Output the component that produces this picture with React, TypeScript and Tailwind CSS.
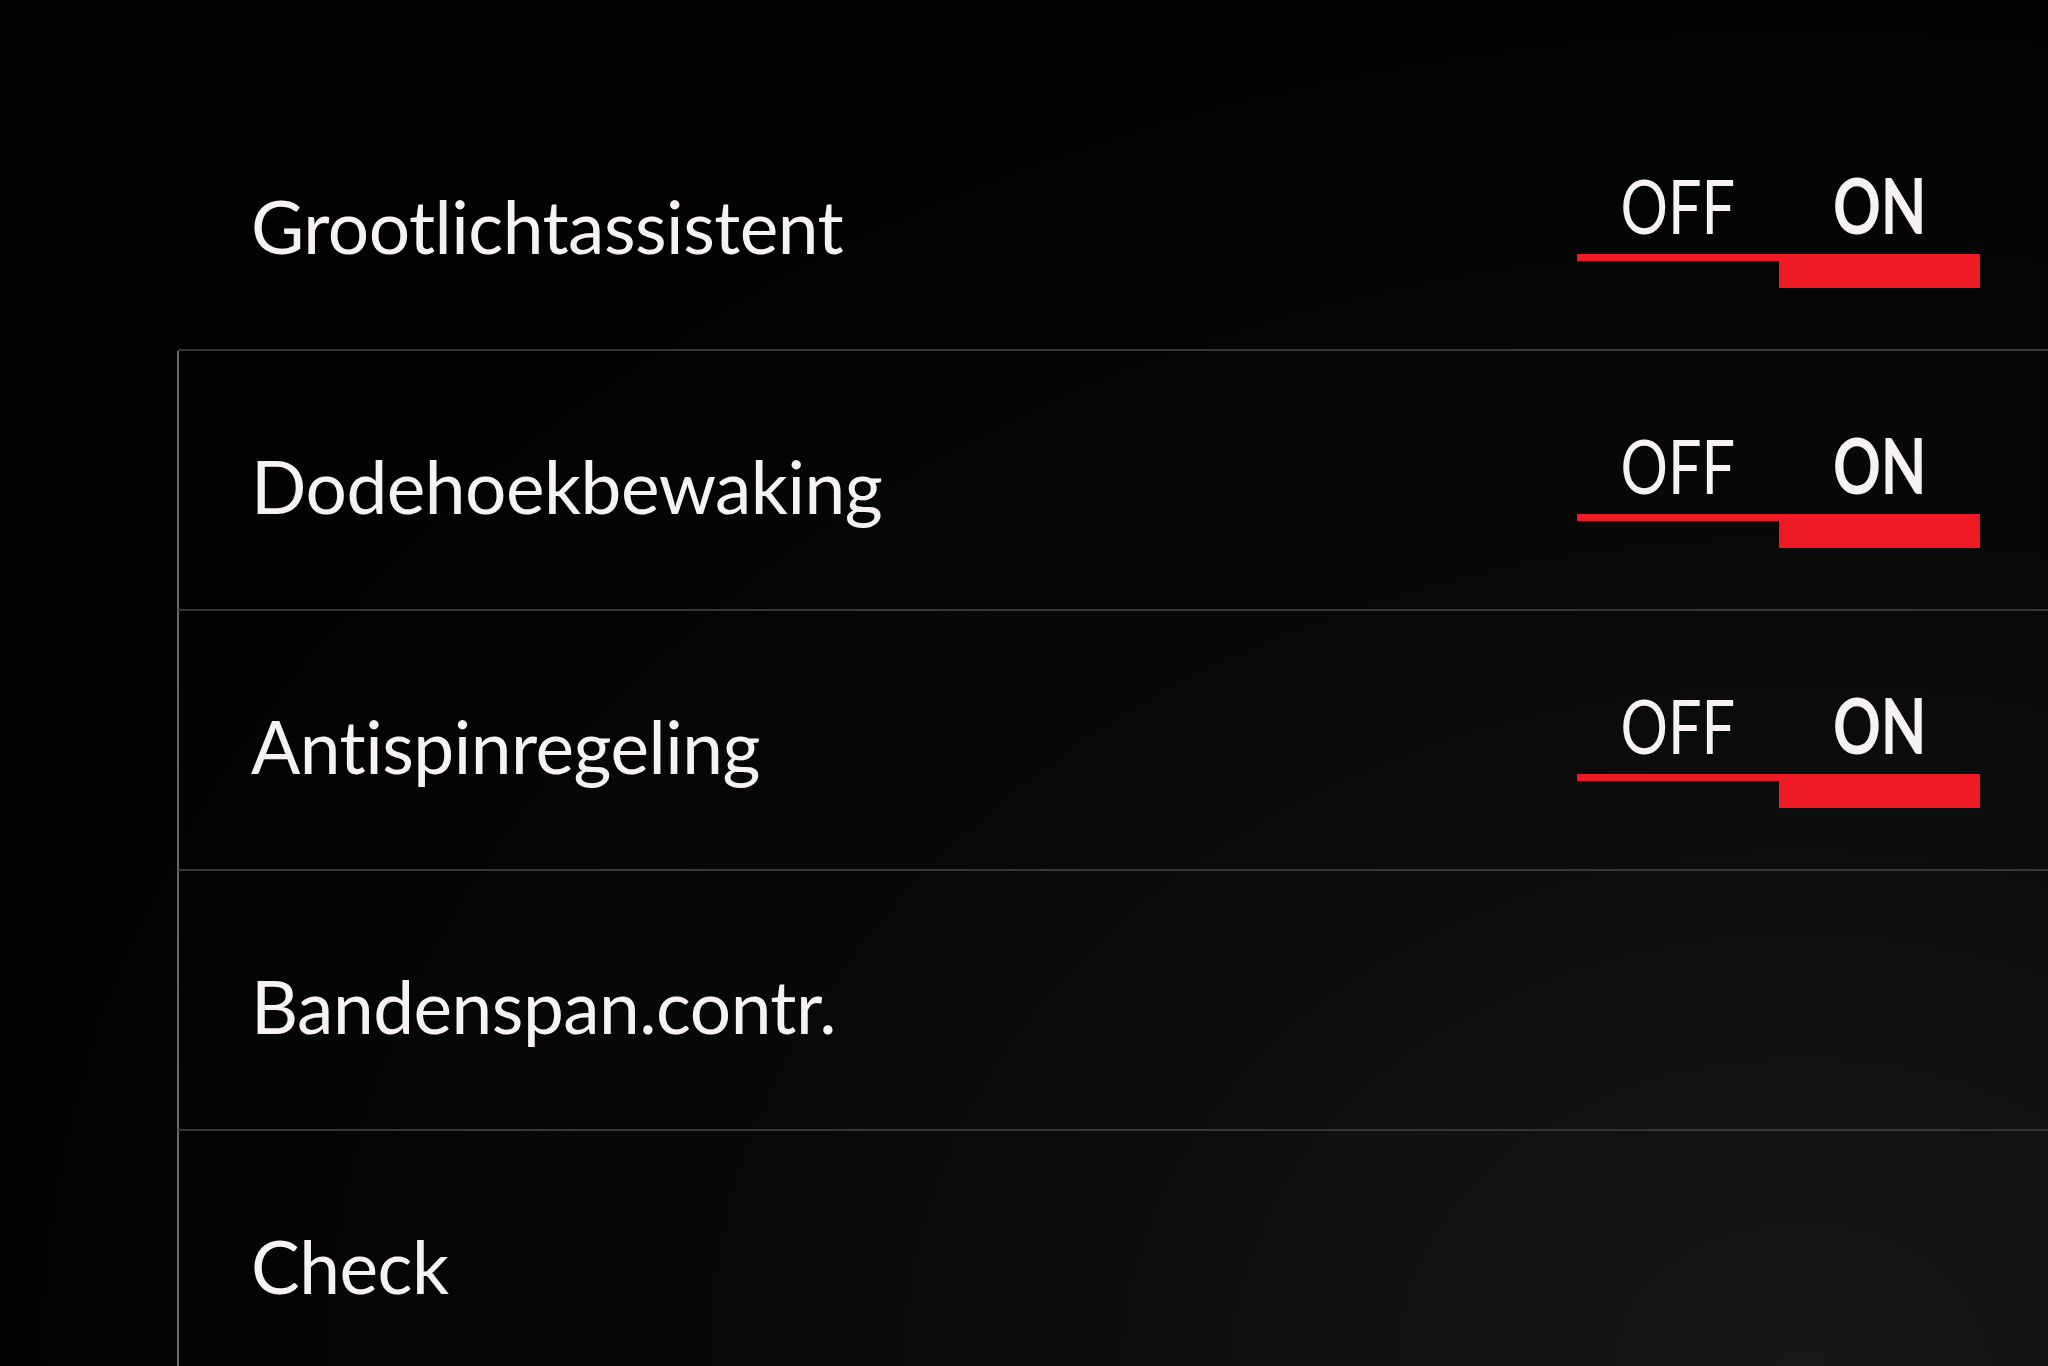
import React from "react";

interface Setting {
  id: number;
  label: string;
  toggle: boolean;
  on?: boolean;
}

const settings: Setting[] = [
  { id: 1, label: "Grootlichtassistent", toggle: true, on: true },
  { id: 2, label: "Dodehoekbewaking", toggle: true, on: true },
  { id: 3, label: "Antispinregeling", toggle: true, on: true },
  { id: 4, label: "Bandenspan.contr.", toggle: false },
  { id: 5, label: "Check", toggle: false },
];

function OnOff({ on }: { on: boolean }) {
  return (
    <div className="w-[403px] flex flex-col">
      {/* labels */}
      <div className="flex text-[76px] leading-none text-[#f7f2f2]">
        <span className={`w-1/2 text-center scale-x-[0.78] ${on ? "font-normal" : "font-bold"}`}>OFF</span>
        <span className={`w-1/2 text-center scale-x-[0.78] ${on ? "font-bold" : "font-normal"}`}>ON</span>
      </div>
      {/* red slider bar */}
      <div className="mt-[11px] h-[34px] flex">
        <div className={`w-1/2 ${on ? "h-[7px]" : "h-full"} bg-[#ee1b24]`}></div>
        <div className={`w-1/2 ${on ? "h-full" : "h-[7px]"} bg-[#ee1b24]`}></div>
      </div>
    </div>
  );
}

export default function App() {
  return (
    <div className="w-[2048px] h-[1366px] overflow-hidden bg-[radial-gradient(ellipse_at_88%_100%,#171717_0%,#090909_40%,#030303_70%,#020202_100%)] font-['Lato',sans-serif]">
      <div className="ml-[177px] pt-[91px]">
        {settings.map((s, i) => (
          <div
            key={s.id}
            className={`h-[260px] flex items-start border-b-2 border-b-[#363636] border-l-2 ${i > 0 ? "border-l-[#6a6a6a]" : "border-l-transparent"}`}
          >
            <div className="flex-1 self-center pt-[12px] pl-[72px] text-[73px] leading-none tracking-[-0.5px] text-[#f7f2f2]">
              {s.label}
            </div>
            {s.toggle && (
              <div className="mt-[76px] mr-[68px]">
                <OnOff on={!!s.on} />
              </div>
            )}
          </div>
        ))}
      </div>
    </div>
  );
}
